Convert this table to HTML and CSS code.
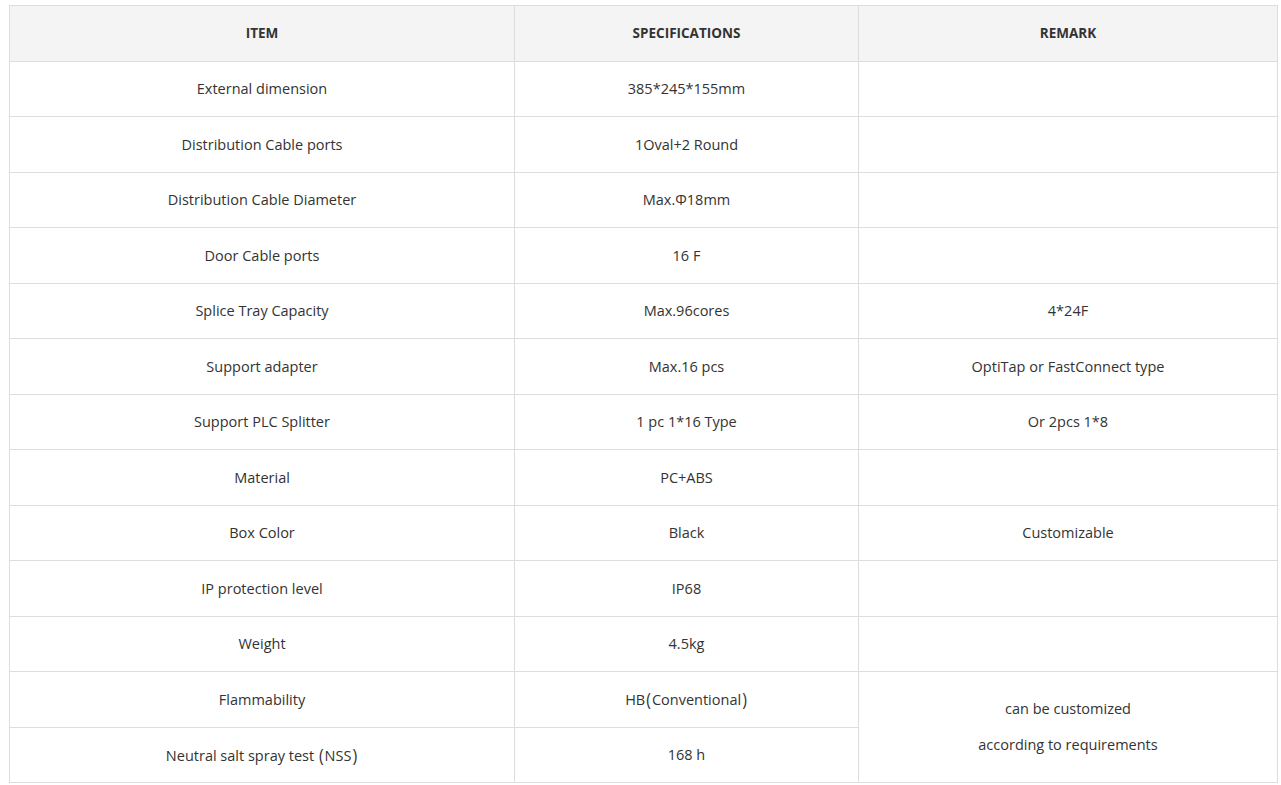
FILE: index.html
```html
<!DOCTYPE html>
<html>
<head>
<meta charset="utf-8">
<link rel="stylesheet" href="styles.css">
</head>
<body>
<div class="wrap">
<table class="spec">
  <colgroup>
    <col class="c1"><col class="c2"><col class="c3">
  </colgroup>
  <thead>
    <tr><th>ITEM</th><th>SPECIFICATIONS</th><th class="remark-h">REMARK</th></tr>
  </thead>
  <tbody>
    <tr><td>External dimension</td><td>385*245*155mm</td><td></td></tr>
    <tr><td>Distribution Cable ports</td><td>1Oval+2 Round</td><td></td></tr>
    <tr><td>Distribution Cable Diameter</td><td>Max.Φ18mm</td><td></td></tr>
    <tr><td>Door Cable ports</td><td>16 F</td><td></td></tr>
    <tr><td>Splice Tray Capacity</td><td>Max.96cores</td><td>4*24F</td></tr>
    <tr><td>Support adapter</td><td>Max.16 pcs</td><td>OptiTap or FastConnect type</td></tr>
    <tr><td>Support PLC Splitter</td><td>1 pc 1*16 Type</td><td>Or 2pcs 1*8</td></tr>
    <tr><td>Material</td><td>PC+ABS</td><td></td></tr>
    <tr><td>Box Color</td><td>Black</td><td>Customizable</td></tr>
    <tr><td>IP protection level</td><td>IP68</td><td></td></tr>
    <tr><td>Weight</td><td>4.5kg</td><td></td></tr>
    <tr><td>Flammability</td><td>HB<span class="paren">(</span>Conventional<span class="paren">)</span></td><td rowspan="2" class="merged"><p>can be customized</p><p>according to requirements</p></td></tr>
    <tr><td>Neutral salt spray test <span class="paren">(</span>NSS<span class="paren">)</span></td><td>168 h</td></tr>
  </tbody>
</table>
</div>
</body>
</html>
```
FILE: styles.css
```css
html, body {
  margin: 0;
  padding: 0;
  background: #fff;
}
.wrap {
  padding: 5px 4px 0 9px;
}
.spec {
  border-collapse: collapse;
  width: 1268px;
  table-layout: fixed;
  font-family: "Open Sans", "Liberation Sans", sans-serif;
  color: #333;
}
.c1 { width: 505px; }
.c2 { width: 344px; }
.c3 { width: 419px; }
.spec th, .spec td {
  border: 1px solid #dddddd;
  text-align: center;
  vertical-align: middle;
  height: 55.5px;
  padding: 0 4px;
  box-sizing: border-box;
}
.spec th {
  background: #f4f4f4;
  font-size: 13.5px;
  font-weight: 700;
  color: #333;
}
.spec td {
  font-size: 14.5px;
  color: #333;
}
.paren {
  display: inline-block;
  font-size: 16px;
  margin: 0 1px;
  transform: scaleY(1.15);
}
.merged p {
  margin: 0;
  line-height: 36px;
}
```
